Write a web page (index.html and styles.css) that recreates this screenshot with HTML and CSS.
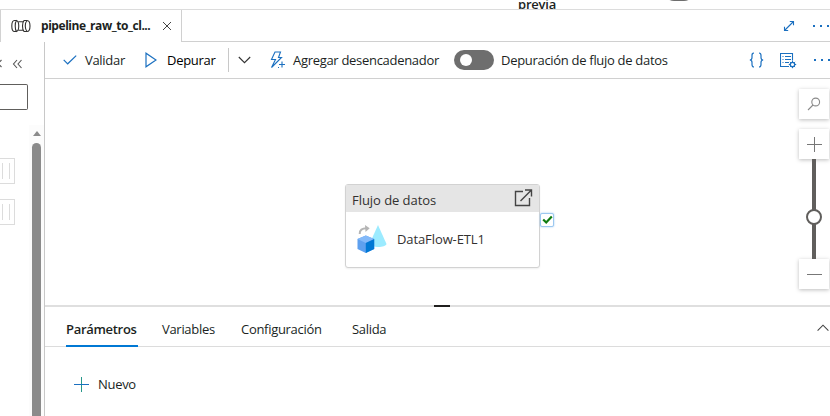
FILE: index.html
```
<!DOCTYPE html>
<html lang="es">
<head>
<meta charset="utf-8">
<title>pipeline_raw_to_cl...</title>
<link rel="stylesheet" href="styles.css">
</head>
<body>
<div class="app">
  <header class="preview"><span class="preview-text">previa</span><span class="preview-toggle"></span></header>
  <div class="tabstrip">
    <div class="prev-tab"></div>
    <div class="tab">
      <svg class="tab-icon" width="20" height="14" viewBox="0 0 20 14" fill="none" stroke="#323130" stroke-width="1.1"><path d="M3.5 1.5C1.8 1.5.8 4 .8 7s1 5.500 2.700 5.500h2M3.500 1.500h2M5.500 1.500C3.800 3.500 3.800 10.500 5.500 12.500 8.500 11.500 8.500 2.500 5.500 1.500ZM7.500 2.800h5M7.500 11.200h5M13 1.500c-2 2-2 9 0 11M13 1.500h3c4 0 4 11 0 11h-3M16 1.500c-2.300 2.500-2.300 8.500 0 11"/></svg>
      <span class="tab-name">pipeline_raw_to_cl...</span>
      <svg class="close" width="10" height="10" viewBox="0 0 10 10" fill="none" stroke="#444"><path d="M1 1l8 8M9 1L1 9"/></svg>
    </div>
    <div class="tab-tools">
      <svg width="12" height="12" viewBox="0 0 12 12" fill="none" stroke="#1b70c0" stroke-width="1.100"><path d="M1.500 10.500l9-9M6.800 1.500h3.700v3.700M1.500 6.800v3.700h3.700"/></svg>
      <svg class="more" width="18" height="4" viewBox="0 0 18 4" fill="#1b70c0"><path d="M1 1h2v2H1zM8 1h2v2H8zM15 1h2v2h-2z"/></svg>
    </div>
  </div>
  <div class="body">
    <aside class="side">
      <div class="collapse">
        <svg width="22" height="10" viewBox="0 0 22 10" fill="none" stroke="#555" stroke-width="1.100"><path d="M1.500 1L-2 4.500 1.500 8M17 1l-3.500 4L17 9M21.500 1L18 5l3.500 4"/></svg>
      </div>
      <div class="search"></div>
      <div class="side-scroll">
        <div class="grips"><div class="grip"></div><div class="grip"></div></div>
        <div class="scrollbar"><i class="arrow"></i><i class="thumb"></i></div>
      </div>
    </aside>
    <main class="main">
      <div class="toolbar">
        <svg class="i-check" width="14" height="10" viewBox="0 0 14 10" fill="none" stroke="#1b70c0" stroke-width="1.200"><path d="M.7 4.800l4 4L13.200.6"/></svg>
        <span class="t-validar">Validar</span>
        <svg class="i-play" width="12" height="16" viewBox="0 0 12 16" fill="none" stroke="#1b70c0" stroke-width="1.200"><path d="M1 1.200v13.600L11 8Z"/></svg>
        <span class="t-depurar">Depurar</span>
        <i class="sep"></i>
        <svg class="i-down" width="13" height="8" viewBox="0 0 13 8" fill="none" stroke="#333" stroke-width="1.100"><path d="M.8 1l5.700 5.700L12.200 1"/></svg>
        <svg class="i-bolt" width="16" height="18" viewBox="0 0 16 18" fill="none" stroke="#1b70c0" stroke-width="1.100"><path d="M9 16.500H8M10.500 1H5L1.500 8.500h4L1.500 16.500 11.500 6.500H8.500L10.500 1ZM12 10.500v6M9 13.500h6"/></svg>
        <span class="t-agregar">Agregar desencadenador</span>
        <span class="toggle"></span>
        <span class="t-flujo">Depuración de flujo de datos</span>
        <svg class="i-code" width="15" height="16" viewBox="0 0 15 16" fill="none" stroke="#1b70c0" stroke-width="1.200"><path d="M5 1C3 1 3 2 3 3.500v2C3 7 2.500 8 .8 8 2.500 8 3 9 3 10.500v2C3 14 3 15 5 15M10 1c2 0 2 1 2 2.500v2C12 7 12.500 8 14.200 8 12.500 8 12 9 12 10.500v2c0 1.500 0 2.500-2 2.500"/></svg>
        <svg class="i-props" width="17" height="17" viewBox="0 0 17 17" fill="none" stroke="#1b70c0"><path d="M9 14.500H.5V1.500h12v7M2.500 4.500h1M5 4.500h6M2.500 7.500h1M5 7.500h6M2.500 10.500h1M5 10.500h4" stroke-width="1.100"/><circle cx="12.500" cy="12.500" r="2.200" stroke-width="1.300"/><path d="M12.500 8.800v1.500M12.500 14.700v1.500M8.800 12.500h1.500M14.700 12.500h1.500M9.900 9.900l1 1M14.100 14.100l1 1M9.900 15.100l1-1M14.100 10.900l1-1"/></svg>
        <svg class="more2" width="18" height="4" viewBox="0 0 18 4" fill="#1b70c0"><path d="M1 1h2v2H1zM8 1h2v2H8zM15 1h2v2h-2z"/></svg>
      </div>
      <div class="canvas">
        <div class="node">
          <div class="node-head"><span>Flujo de datos</span>
            <svg width="19" height="19" viewBox="0 0 19 19" fill="none" stroke="#444" stroke-width="1.400"><path d="M9 2.500H1.500v14h14V9M6.500 12L17.200 1.300M11 1h6.500v6.500"/></svg>
          </div>
          <div class="node-body">
            <svg width="31" height="30" viewBox="0 0 31 30"><path d="M22 1l8.500 19c-1 4-15 4-17 0Z" fill="#9cebff"/><path d="M1.500 15L9.800 11.500 18.200 15v10L9.800 29 1.500 25Z" fill="#5ea0ef"/><path d="M1.500 15L9.800 11.500 18.200 15 9.800 19Z" fill="#83b9f9"/><path d="M9.800 19L18.200 15v10L9.800 29Z" fill="#0078d4"/><path d="M3.700 10C3.500 6 6 4.200 11 4.300" fill="none" stroke="#b5b5b5" stroke-width="2"/><path d="M9 1l4.700 3.300L9.500 8Z" fill="#b5b5b5"/></svg>
            <span>DataFlow-ETL1</span>
          </div>
        </div>
        <div class="ok"><svg width="11" height="10" viewBox="0 0 11 10" fill="none" stroke="#107c10" stroke-width="2.200"><path d="M1.200 4.500l3 3L9.800 1.500"/></svg></div>
        <div class="zoom">
          <div class="zbtn zfind"><svg width="14" height="14" viewBox="0 0 14 14" fill="none" stroke="#8a8a8a" stroke-width="1.100"><circle cx="8.700" cy="5" r="3.900"/><path d="M6 8L1 13"/></svg></div>
          <div class="zbtn"><svg width="15" height="15" viewBox="0 0 15 15" stroke="#777"><path d="M7.500 0v15M0 7.500h15"/></svg></div>
          <div class="track"><i class="knob"></i></div>
          <div class="zbtn"><svg width="15" height="15" viewBox="0 0 15 15" stroke="#777"><path d="M0 7.500h15"/></svg></div>
        </div>
      </div>
      <div class="splitter"><i class="handle"></i></div>
      <nav class="panel-tabs">
        <span class="ptab active">Parámetros</span><span class="ptab p2">Variables</span><span class="ptab p3">Configuración</span><span class="ptab p4">Salida</span>
        <svg class="i-up" width="12" height="8" viewBox="0 0 12 8" fill="none" stroke="#444" stroke-width="1.100"><path d="M.6 6.600L6 1.200l5.400 5.400"/></svg>
      </nav>
      <div class="new">
        <svg width="15" height="15" viewBox="0 0 15 15" fill="none"><path d="M7.500 0v15" stroke="#27978a"/><path d="M0 7.500h15" stroke="#1b70c0"/></svg>
        <span>Nuevo</span>
      </div>
    </main>
  </div>
</div>
</body>
</html>
```
FILE: styles.css
```
* { box-sizing: border-box; }
body { margin: 0; background: #fff; font: 13px/18px "Open Sans", "Noto Sans", sans-serif; color: #201f1e; letter-spacing: -0.3px; }
svg, i { display: block; flex: none; }
span { white-space: nowrap; flex: none; }
.app { width: 830px; height: 416px; overflow: hidden; display: flex; flex-direction: column; }
.preview { height: 10px; flex: none; display: flex; align-items: flex-end; border-bottom: 1px solid #dcdcdc; padding-left: 518px; overflow: hidden; }
.preview-text { width: 146px; font-weight: 600; line-height: 18px; margin-bottom: -4px; letter-spacing: -0.2px; }
.preview-toggle { width: 30px; height: 20px; border-radius: 10px; background: #6e6e6e; margin-bottom: 8px; }
.tabstrip { height: 32px; flex: none; display: flex; }
.prev-tab { width: 3px; background: #e9e9e9; border-right: 1px solid #d2d2d2; }
.tab { width: 181px; display: flex; align-items: center; border-right: 1px solid #d0d0d0; padding: 0 9px 0 10px; }
.tab-name { margin-left: 10px; width: 121px; font-weight: 700; font-size: 12px; letter-spacing: -0.45px; }
.tab-tools { flex: 1; display: flex; align-items: center; border-bottom: 1px solid #d0d0d0; padding-left: 601px; }
.tab-tools .more { margin-left: 17px; }
.body { flex: 1; display: flex; min-height: 0; }
.side { width: 44px; flex: none; display: flex; flex-direction: column; }
.collapse { height: 42px; padding-top: 17px; }
.search { width: 28px; height: 26px; border: 1px solid #605e5c; border-left: 0; border-radius: 0 2px 2px 0; }
.side-scroll { flex: 1; display: flex; margin-top: 15px; }
.grips { width: 29px; padding-top: 33px; display: flex; flex-direction: column; gap: 15px; }
.grip { width: 15px; height: 26px; border: 1px solid #dcdcdc; border-left: 0; padding: 4px 4px 4px 0; display: flex; justify-content: flex-end; }
.grip::after { content: ""; width: 6px; border: 1px solid #dcdcdc; border-width: 0 1px; }
.scrollbar { width: 15px; background: #fcfcfc; padding: 6px 3px 0; display: flex; flex-direction: column; align-items: center; }
.arrow { border: 4.5px solid transparent; border-bottom: 5px solid #8b8b8b; border-top: 0; }
.thumb { width: 9px; flex: 1; background: #8b8b8b; border-radius: 5px 5px 0 0; margin-top: 7px; }
.main { flex: 1; min-width: 0; border-left: 1px solid #c8c8c8; display: flex; flex-direction: column; }
.toolbar { height: 37px; flex: none; display: flex; align-items: center; border-bottom: 1px solid #d0d0d0; padding-left: 18px; }
.t-validar { margin-left: 8px; width: 60px; }
.t-depurar { margin-left: 10px; width: 61px; color: #000; }
.sep { width: 1px; height: 24px; background: #c8c8c8; }
.i-down { margin-left: 9px; }
.i-bolt { margin-left: 19px; }
.t-agregar { margin-left: 7px; width: 161px; }
.toggle { width: 40px; height: 20px; border-radius: 10px; background: #6e6e6e; padding: 4px 6px; }
.toggle::before { content: ""; display: block; width: 12px; height: 12px; border-radius: 50%; background: #fff; }
.t-flujo { margin-left: 7px; width: 248px; }
.i-props { margin-left: 16px; }
.more2 { margin-left: 16px; }
.canvas { height: 226px; flex: none; position: relative; }
.node { position: absolute; left: 300px; top: 105px; width: 195px; height: 84px; border: 1px solid #d2d2d2; border-radius: 3px; background: #fff; box-shadow: 0 1px 2px #0001; }
.node-head { height: 27px; background: #e5e5e5; display: flex; align-items: center; justify-content: space-between; padding: 0 6px; color: #323130; }
.node-head span { padding-top: 3px; letter-spacing: -0.05px; }
.node-body { display: flex; align-items: center; padding: 11px 10px; height: 54px; color: #323130; }
.node-body span { margin-left: 10px; letter-spacing: -0.1px; }
.ok { position: absolute; left: 495px; top: 134px; width: 14px; height: 14px; border: 1px solid #9cc8f0; border-radius: 2px; background: #fff; box-shadow: 0 0 2px #9cc8f0; display: flex; align-items: center; justify-content: center; }
.zoom { position: absolute; left: 754px; top: 10px; width: 30px; display: flex; flex-direction: column; align-items: center; }
.zbtn { width: 30px; height: 30px; flex: none; display: flex; align-items: center; justify-content: center; background: #fff; box-shadow: 0 1px 4px #0004; }
.zfind { margin-bottom: 10px; }
.track { width: 4px; height: 100px; background: #605e5c; display: flex; justify-content: center; align-items: center; padding-top: 16px; position: relative; z-index: 1; }
.knob { width: 16px; height: 16px; border: 2px solid #605e5c; border-radius: 50%; background: #fff; }
.splitter { height: 2px; flex: none; background: #dfdfdf; display: flex; padding-left: 389px; }
.handle { width: 16px; height: 2px; background: #201f1e; }
.panel-tabs { height: 40px; flex: none; display: flex; padding-left: 21px; border-bottom: 1px solid #dcdcdc; }
.ptab { padding-top: 13px; height: 40px; }
.active { width: 72px; font-weight: 600; border-bottom: 2px solid #0078d4; }
.p2 { margin-left: 24px; width: 55px; }
.p3 { margin-left: 24px; width: 87px; }
.p4 { margin-left: 24px; width: 37px; }
.i-up { margin: 17px 0 0 428px; }
.new { display: flex; align-items: center; padding: 28px 0 0 29px; }
.new span { margin-left: 9px; }
```
